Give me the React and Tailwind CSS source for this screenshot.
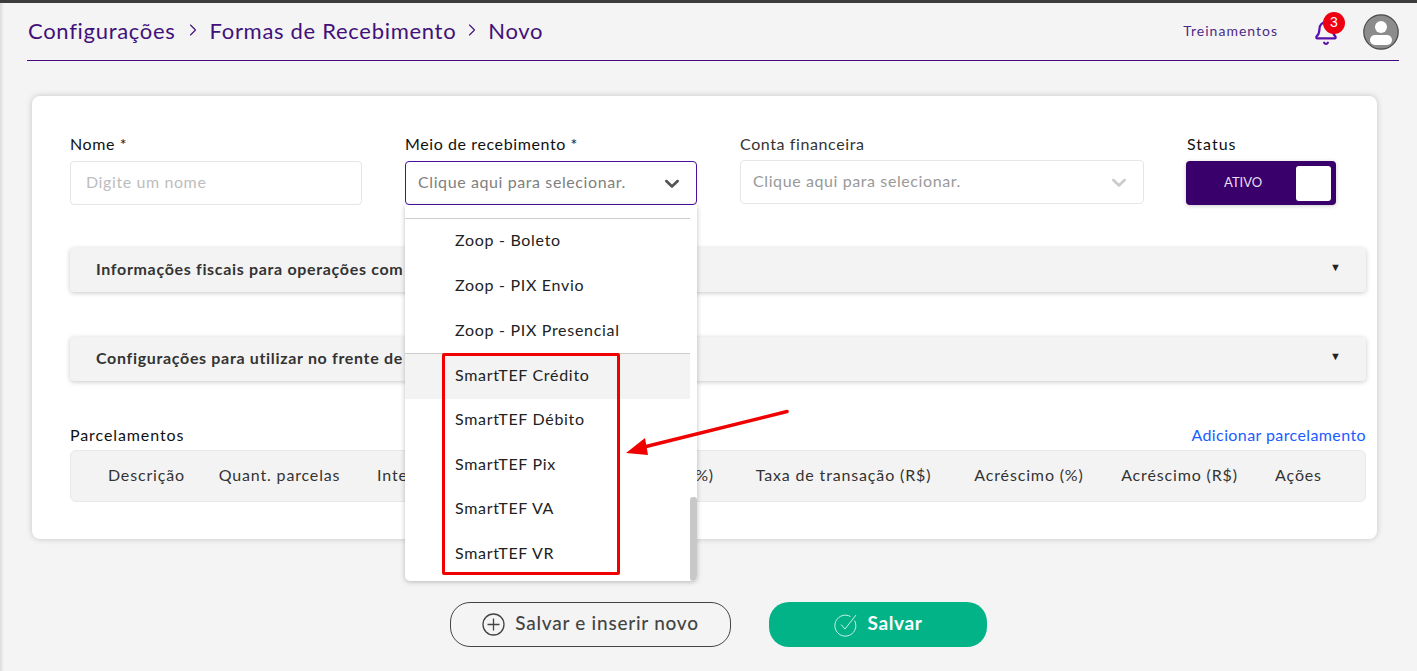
import React from 'react';
import { Bell, ChevronRight } from 'lucide-react';

const opcoes = [
  { nome: 'Zoop - Boleto', h: 'h-[45px]' },
  { nome: 'Zoop - PIX Envio', h: 'h-[45px]' },
  { nome: 'Zoop - PIX Presencial', h: 'h-[45px]', separador: true },
  { nome: 'SmartTEF Crédito', h: 'h-[44.5px]', ativo: true },
  { nome: 'SmartTEF Débito', h: 'h-[44.5px]' },
  { nome: 'SmartTEF Pix', h: 'h-[44.5px]' },
  { nome: 'SmartTEF VA', h: 'h-[44.5px]' },
  { nome: 'SmartTEF VR', h: 'h-[44.5px]' },
];

const colunas = [
  { nome: 'Descrição', c: 'w-[75px] justify-center' },
  { nome: 'Quant. parcelas', c: 'w-[121px] ml-[35px] justify-center' },
  { nome: 'Intervalo (dias)', c: 'w-[130px] ml-[37px] justify-start' },
  { nome: 'Taxa de cartão (%)', c: 'w-[170px] ml-[37px] justify-end' },
  { nome: 'Taxa de transação (R$)', c: 'w-[177px] ml-[41px] justify-center' },
  { nome: 'Acréscimo (%)', c: 'w-[112px] ml-[41px] justify-center' },
  { nome: 'Acréscimo (R$)', c: 'w-[117px] ml-[36px] justify-center' },
  { nome: 'Ações', c: 'w-[47px] ml-[37px] justify-center' },
];

const Chevron = ({ className }) => (
  <svg viewBox="0 0 20 20" className={className} fill="currentColor">
    <path d="M4.516 7.548c0.436-0.446 1.043-0.481 1.576 0l3.908 3.747 3.908-3.747c0.533-0.481 1.141-0.446 1.574 0 0.436 0.445 0.408 1.197 0 1.615-0.406 0.418-4.695 4.502-4.695 4.502-0.217 0.223-0.502 0.335-0.787 0.335s-0.57-0.112-0.789-0.335c0 0-4.287-4.084-4.695-4.502s-0.436-1.17 0-1.615z" />
  </svg>
);

const Sanfona = ({ titulo, className }) => (
  <div className={`h-[44px] bg-[#f3f3f3] rounded-[4px] shadow-[0_1px_5px_rgba(0,0,0,0.22)] flex items-center justify-between pl-[26px] pr-[25px] ${className}`}>
    <span className="text-[16px] font-bold text-[#333] tracking-[0.67px] pb-[2px]">{titulo}</span>
    <span className="text-[11px] text-[#222] -mt-[6px]">▼</span>
  </div>
);

const App = () => {
  return (
    <div className="relative h-[671px] overflow-hidden bg-[#f4f4f4] font-['Lato','Noto_Sans',sans-serif] text-[#111]">
      <div className="h-[3px] bg-[#3c3c3c]"></div>

      {/* Cabeçalho */}
      <div className="ml-[27px] mr-[18px] h-[58px] border-b border-[#45087f] flex items-center justify-between text-[#42107a]">
        <div className="flex items-center text-[22px] tracking-[0.7px] pb-[3px] pl-[1px]">
          <span>Configurações</span>
          <ChevronRight size={20} strokeWidth={1.3} className="mx-[7px]" />
          <span>Formas de Recebimento</span>
          <ChevronRight size={20} strokeWidth={1.3} className="mx-[6px]" />
          <span>Novo</span>
        </div>
        <div className="flex items-center">
          <span className="text-[14px] tracking-[1px] mr-[35px] pb-[2px] text-[#4d2a85]">Treinamentos</span>
          <div className="relative mr-[24px] mt-[2px]">
            <Bell size={26} strokeWidth={2} className="text-[#5a10a8]" />
            <span className="absolute -top-[8px] left-[10px] w-[22px] h-[22px] rounded-full bg-[#ee0010] text-white text-[14px] flex items-center justify-center font-['Liberation_Sans',sans-serif]">3</span>
          </div>
          <svg width="36" height="36" viewBox="0 0 36 36">
            <circle cx="18" cy="18" r="17.2" fill="#8c8c8c" stroke="#4a4a4a" strokeWidth="1.2" />
            <circle cx="18" cy="13" r="6" fill="#fff" />
            <rect x="7" y="21" width="22" height="10" rx="5" fill="#fff" />
          </svg>
        </div>
      </div>

      {/* Cartão */}
      <div className="ml-[32px] mt-[35px] w-[1345px] h-[443px] bg-white rounded-[8px] shadow-[0_0_6px_rgba(0,0,0,0.2)] pt-[38px] pl-[38px] pr-[11px]">
        <div className="flex">
          <div className="w-[292px] mr-[43px]">
            <div className="text-[16px] h-[20px] leading-[20px] tracking-[0.6px] mb-[7px]">Nome *</div>
            <div className="h-[44px] border border-[#e6e6e6] rounded-[4px] flex items-center px-[15px] pb-[2px] text-[16px] text-[#bdbdbd] tracking-[0.6px]">Digite um nome</div>
          </div>
          <div className="w-[292px] mr-[43px]">
            <div className="text-[16px] h-[20px] leading-[20px] tracking-[0.6px] mb-[7px]">Meio de recebimento *</div>
            <div className="h-[44px] border border-[#4b0f9c] rounded-[4px] flex items-center justify-between px-[12px] text-[16px] text-[#808080] tracking-[0.6px]">
              <span className="pb-[2px]">Clique aqui para selecionar.</span>
              <Chevron className="w-[24px] h-[24px] text-[#555]" />
            </div>
          </div>
          <div className="w-[404px] mr-[42px]">
            <div className="text-[16px] h-[20px] leading-[20px] tracking-[0.6px] text-[#333] mb-[6px]">Conta financeira</div>
            <div className="h-[44px] border border-[#e6e6e6] rounded-[4px] flex items-center justify-between px-[12px] text-[16px] text-[#999] tracking-[0.6px]">
              <span className="pb-[3px]">Clique aqui para selecionar.</span>
              <Chevron className="w-[24px] h-[24px] text-[#ccc]" />
            </div>
          </div>
          <div className="w-[150px]">
            <div className="text-[16px] h-[20px] leading-[20px] tracking-[1px] pl-[1px] mb-[7px]">Status</div>
            <div className="h-[44px] bg-[#39006b] rounded-[4px] flex items-center justify-between pl-[38px] pr-[5px] shadow-[0_1px_4px_rgba(0,0,0,0.2)]">
              <span className="text-[13px] text-[#e8dff0]">ATIVO</span>
              <span className="w-[35px] h-[35px] bg-white rounded-[3px]"></span>
            </div>
          </div>
        </div>

        <Sanfona titulo="Informações fiscais para operações com cartão" className="mt-[43px]" />
        <Sanfona titulo="Configurações para utilizar no frente de caixa" className="mt-[45px]" />

        <div className="mt-[45px] flex justify-between items-end h-[24px]">
          <span className="text-[16px] tracking-[0.9px] pb-[3px]">Parcelamentos</span>
          <span className="text-[16px] tracking-[0.4px] text-[#1a5cff] pb-[3px]">Adicionar parcelamento</span>
        </div>
        <div className="h-[52px] bg-[#f3f3f3] border border-[#e8e8e8] rounded-[6px] flex items-center pl-[38px] pb-[2px] text-[16px] text-[#333] tracking-[0.85px]">
          {colunas.map((c) => (
            <div key={c.nome} className={`${c.c} flex whitespace-nowrap shrink-0`}>{c.nome}</div>
          ))}
        </div>
      </div>

      {/* Botões */}
      <div className="mt-[63px] ml-[450px] flex gap-[38px]">
        <div className="w-[281px] h-[45px] border border-[#444] rounded-[20px] flex items-center justify-center gap-[10px] text-[19px] font-medium text-[#444] tracking-[0.75px]">
          <svg width="23" height="23" viewBox="0 0 23 23" fill="none" stroke="#444" strokeWidth="1.3">
            <circle cx="11.5" cy="11.5" r="10.5" />
            <path d="M11.5 5.5v12M5.5 11.5h12" />
          </svg>
          <span className="pb-[2px]">Salvar e inserir novo</span>
        </div>
        <div className="w-[218px] h-[45px] bg-[#03b388] rounded-[20px] flex items-center justify-center gap-[10px] text-[19px] font-bold text-white tracking-[0.6px]">
          <svg width="24" height="24" viewBox="0 0 24 24" fill="none" stroke="#c8f0e4" strokeWidth="1">
            <path d="M20.5 7.5a10.5 10.5 0 1 1-4-4" />
            <path d="M7 11.5l4 4.5L22 2" />
          </svg>
          <span className="pb-[2px]">Salvar</span>
        </div>
      </div>

      {/* Lista aberta do select */}
      <div className="absolute left-[405px] top-[205px] w-[292px] h-[376px] bg-white rounded-b-[5px] shadow-[0_1px_5px_rgba(0,0,0,0.25)] overflow-hidden flex">
        <div className="flex-1 pt-[13px]">
          <div className="border-t border-[#ccc]"></div>
          {opcoes.map((o) => (
            <div
              key={o.nome}
              className={`${o.h} flex items-center pl-[50px] text-[16px] tracking-[0.7px] text-[#222] ${o.ativo ? 'bg-[#f3f3f3]' : ''} ${o.separador ? 'border-b border-[#ccc]' : ''}`}
            >
              <span className="pb-[3px]">{o.nome}</span>
            </div>
          ))}
        </div>
        <div className="w-[7px] flex flex-col justify-end">
          <div className="h-[84px] bg-[#c8c8c8] rounded-[3px]"></div>
        </div>
      </div>

      {/* Marcação vermelha por cima do print */}
      <div className="absolute left-[442px] top-[353px] w-[178px] h-[222px] border-[3px] border-[#f00000] rounded-[2px]"></div>
      <svg className="absolute left-[620px] top-[405px]" width="175" height="55" viewBox="0 0 175 55">
        <path d="M167 6.5L20 43" stroke="#f00000" strokeWidth="3.5" strokeLinecap="round" />
        <path d="M6 48L25 33L28 50Z" fill="#f00000" />
      </svg>

      <div className="absolute left-0 top-[3px] bottom-0 w-[4px] bg-gradient-to-r from-[#dcdcdc] to-[#f4f4f4]"></div>
    </div>
  );
};

export default App;
